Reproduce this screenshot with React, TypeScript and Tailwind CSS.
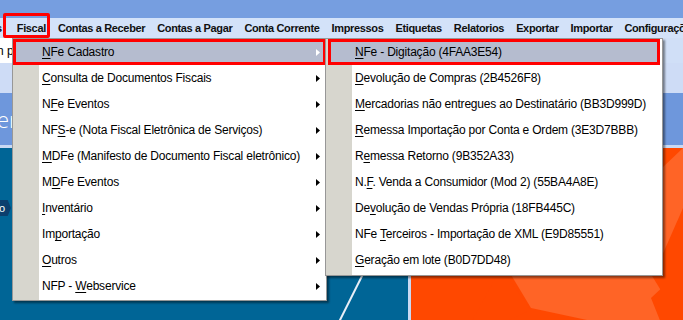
import React from 'react';

type Item = { pre: string; key: string; post: string };

const fiscalItems: Item[] = [
  { pre: '', key: 'N', post: 'Fe Cadastro' },
  { pre: '', key: 'C', post: 'onsulta de Documentos Fiscais' },
  { pre: 'N', key: 'F', post: 'e Eventos' },
  { pre: 'NF', key: 'S', post: '-e (Nota Fiscal Eletrônica de Serviços)' },
  { pre: '', key: 'M', post: 'DFe (Manifesto de Documento Fiscal eletrônico)' },
  { pre: 'M', key: 'D', post: 'Fe Eventos' },
  { pre: '', key: 'I', post: 'nventário' },
  { pre: 'Im', key: 'p', post: 'ortação' },
  { pre: '', key: 'O', post: 'utros' },
  { pre: 'NFP - ', key: 'W', post: 'ebservice' },
];

const cadastroItems: Item[] = [
  { pre: '', key: 'N', post: 'Fe - Digitação (4FAA3E54)' },
  { pre: '', key: 'D', post: 'evolução de Compras (2B4526F8)' },
  { pre: '', key: 'M', post: 'ercadorias não entregues ao Destinatário (BB3D999D)' },
  { pre: '', key: 'R', post: 'emessa Importação por Conta e Ordem (3E3D7BBB)' },
  { pre: 'R', key: 'e', post: 'messa Retorno (9B352A33)' },
  { pre: 'N.', key: 'F', post: '. Venda a Consumidor (Mod 2) (55BA4A8E)' },
  { pre: 'De', key: 'v', post: 'olução de Vendas Própria (18FB445C)' },
  { pre: 'NFe ', key: 'T', post: 'erceiros - Importação de XML (E9D85551)' },
  { pre: '', key: 'G', post: 'eração em lote (B0D7DD48)' },
];

const menuBar = [
  'Fiscal',
  'Contas a Receber',
  'Contas a Pagar',
  'Conta Corrente',
  'Impressos',
  'Etiquetas',
  'Relatorios',
  'Exportar',
  'Importar',
  'Configurações',
];

const Arrow = ({ white }: { white?: boolean }) => (
  <svg width="4" height="7" viewBox="0 0 4 7" className="shrink-0">
    <path d="M0 0 L4 3.5 L0 7 Z" fill={white ? '#ffffff' : '#000000'} />
  </svg>
);

const MenuRow = ({
  item,
  active,
  arrow,
  sub,
}: {
  item: Item;
  active?: boolean;
  arrow?: boolean;
  sub?: boolean;
}) => (
  <div className="relative flex h-[26px] items-center">
    {active && (
      <div className="absolute inset-0 border-[3px] border-[#ff0000] bg-[#b5bccf]" />
    )}
    <div
      className={`relative flex w-full items-center pr-[6px] ${sub ? 'pl-[27px]' : 'pl-[29px]'}`}
    >
      <span className="flex-1 whitespace-nowrap tracking-[-0.2px]">
        {item.pre}
        <span className="underline underline-offset-2">{item.key}</span>
        {item.post}
      </span>
      {arrow && <Arrow white={active} />}
    </div>
  </div>
);

const App = () => {
  return (
    <div className="relative h-[320px] w-[683px] overflow-hidden bg-[#006596] font-['Liberation_Sans',sans-serif] text-[12px] text-black">
      {/* Title bar */}
      <div className="h-[18px] bg-[#769ee0]" />

      {/* Menu bar */}
      <div className="flex h-[20px] items-center overflow-hidden whitespace-nowrap bg-[#d3e2f9] text-[11px] font-bold tracking-[-0.35px] text-[#101010]">
        <span className="ml-[-4px] pr-[9px]">s</span>
        {menuBar.map((m) => (
          <span key={m} className="px-[6px]">
            {m}
          </span>
        ))}
      </div>

      {/* Desktop background */}
      <div className="flex flex-col">
        <div className="flex h-[25px] bg-[#d0dff7]">
          <div className="flex w-[330px] items-center bg-white">
            <span className="ml-[-3px]">n p</span>
          </div>
        </div>
        <div className="h-[30px] bg-[#cedcf6]" />
        <div className="flex h-[52px] items-center overflow-hidden bg-[#6e97dc] text-[22px] text-white">
          <span className="ml-[-3px] font-['Open_Sans',sans-serif] font-light">er</span>
        </div>
        <div className="h-[3px] bg-[#c9d9f3]" />
        <div className="flex h-[175px]">
          <div className="relative w-[408px] bg-[#006596]">
            <div className="mt-[52px] flex h-[16px] w-[11px] items-center bg-[#0b3f6e] text-[11px] text-white [clip-path:polygon(0_0,70%_0,100%_50%,70%_100%,0_100%)]">
              <span className="ml-[-1px]">o</span>
            </div>
            <svg className="absolute left-0 top-0" width="408" height="175">
              <line x1="372" y1="108" x2="337" y2="178" stroke="#e8eef8" strokeWidth="2" />
            </svg>
          </div>
          <div className="w-[3px] bg-[#c9d9f3]" />
          <div className="relative flex-1 bg-[#ff4800]">
            <svg className="absolute left-0 top-0" width="272" height="175">
              <polygon points="90,110 230,110 270,175 190,175 120,160" fill="#ff6426" />
              <polygon points="90,120 120,162 92,175 60,175" fill="#ff4800" />
              <polygon points="230,40 272,0 272,60 250,110" fill="#ff6426" />
              <polygon points="240,150 272,120 272,175 250,175" fill="#ff4800" />
            </svg>
          </div>
        </div>
      </div>

      {/* Fiscal highlight box */}
      <div className="absolute left-[3px] top-[13px] h-[25px] w-[47px] rounded-[2px] border-[3px] border-[#ff0000]" />

      {/* Fiscal dropdown */}
      <div className="absolute left-[12px] top-[38px] w-[315px] border border-[#979797] bg-white shadow-[2px_2px_2px_rgba(0,0,0,0.45)]">
        <div className="absolute bottom-0 left-0 top-0 w-[26px] bg-[#d7d6ce]" />
        <div className="relative pb-[1px]">
          {fiscalItems.map((it, i) => (
            <MenuRow key={i} item={it} active={i === 0} arrow />
          ))}
        </div>
      </div>

      {/* NFe Cadastro submenu */}
      <div className="absolute left-[325px] top-[38px] w-[338px] border border-[#979797] bg-white shadow-[2px_2px_2px_rgba(0,0,0,0.45)]">
        <div className="absolute bottom-0 left-0 top-0 w-[26px] bg-[#d7d6ce]" />
        <div className="relative px-[2px] pb-[2px]">
          {cadastroItems.map((it, i) => (
            <MenuRow key={i} item={it} active={i === 0} sub />
          ))}
        </div>
      </div>
    </div>
  );
};

export default App;
